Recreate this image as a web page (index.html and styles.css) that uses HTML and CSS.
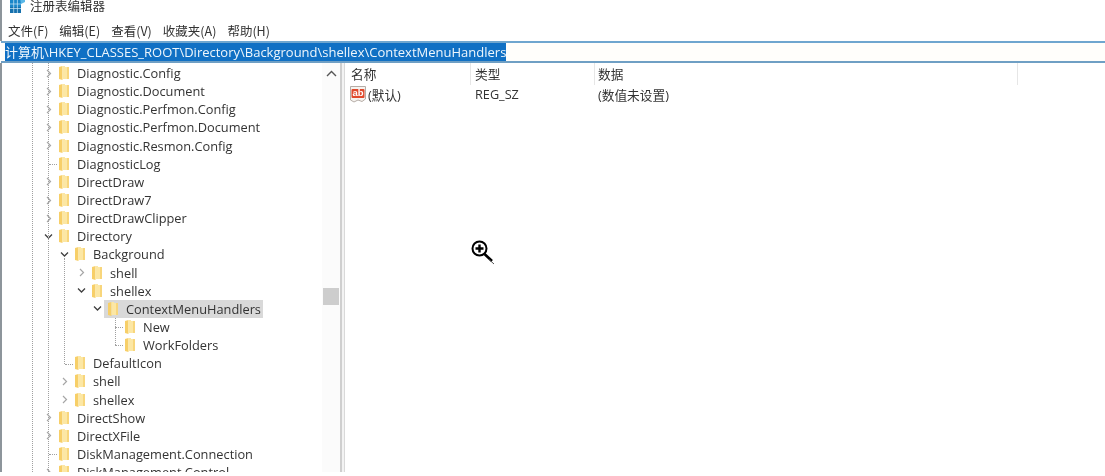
FILE: index.html
```html
<!DOCTYPE html>
<html lang="zh-CN">
<head>
<meta charset="utf-8">
<title>注册表编辑器</title>
<link rel="stylesheet" href="styles.css">
</head>
<body>
<svg class="defs" width="0" height="0" aria-hidden="true">
  <symbol id="folder" viewBox="0 0 10 14">
    <path d="M0 1 L3.5 0 V14 L0 13 Z" fill="#f7cf68"/>
    <path d="M3.5 0 H6 V1 H10 V13 H3.5 Z" fill="#fce7a4"/>
    <path d="M8 1 H10 V13 H8 Z" fill="#f8d67c"/>
  </symbol>
  <symbol id="open" viewBox="0 0 9 9"><path d="M3 1 L6.5 4.5 L3 8" fill="none" stroke="#a6a6a6" stroke-width="1.2"/></symbol>
  <symbol id="down" viewBox="0 0 9 9"><path d="M1 2.5 L4.5 6 L8 2.5" fill="none" stroke="#404040" stroke-width="1.3"/></symbol>
</svg>
<div class="window">
  <header class="titlebar">
    <svg class="appicon" width="15" height="15" viewBox="0 0 15 15">
      <rect x="0" y="2" width="11" height="13" fill="#1a86c9"/>
      <rect x="0" y="9" width="11" height="6" fill="#1570ad"/>
      <path d="M3.7 2V15M7.4 2V15M0 6H11M0 10.5H11" stroke="#cfe8f7" stroke-width="0.7"/>
      <path d="M10 0 L15 0 L15 4 L11 6 Z" fill="#5ab8e8"/>
    </svg>
    <span class="title">注册表编辑器</span>
  </header>
  <nav class="menubar">
    <span>文件(F)</span><span>编辑(E)</span><span>查看(V)</span><span>收藏夹(A)</span><span>帮助(H)</span>
  </nav>
  <div class="address"><span class="selected">计算机\HKEY_CLASSES_ROOT\Directory\Background\shellex\ContextMenuHandlers</span></div>
  <main class="panes">
    <section class="tree">
      <div class="guides">
        <i class="gv g0"></i><i class="gv g1"></i><i class="gv g2"></i><i class="gv g3"></i>
        <i class="gh gh1"></i><i class="gh gh2"></i><i class="gh gh3"></i><i class="gh gh4"></i><i class="gh gh5"></i>
      </div>
      <ul class="rows">
        <li class="row l0"><svg class="exp"><use href="#open"/></svg><svg class="fld"><use href="#folder"/></svg><span>Diagnostic.Config</span></li>
        <li class="row l0"><svg class="exp"><use href="#open"/></svg><svg class="fld"><use href="#folder"/></svg><span>Diagnostic.Document</span></li>
        <li class="row l0"><svg class="exp"><use href="#open"/></svg><svg class="fld"><use href="#folder"/></svg><span>Diagnostic.Perfmon.Config</span></li>
        <li class="row l0"><svg class="exp"><use href="#open"/></svg><svg class="fld"><use href="#folder"/></svg><span>Diagnostic.Perfmon.Document</span></li>
        <li class="row l0"><svg class="exp"><use href="#open"/></svg><svg class="fld"><use href="#folder"/></svg><span>Diagnostic.Resmon.Config</span></li>
        <li class="row l0"><i class="exp"></i><svg class="fld"><use href="#folder"/></svg><span>DiagnosticLog</span></li>
        <li class="row l0"><svg class="exp"><use href="#open"/></svg><svg class="fld"><use href="#folder"/></svg><span>DirectDraw</span></li>
        <li class="row l0"><svg class="exp"><use href="#open"/></svg><svg class="fld"><use href="#folder"/></svg><span>DirectDraw7</span></li>
        <li class="row l0"><svg class="exp"><use href="#open"/></svg><svg class="fld"><use href="#folder"/></svg><span>DirectDrawClipper</span></li>
        <li class="row l0"><svg class="exp"><use href="#down"/></svg><svg class="fld"><use href="#folder"/></svg><span>Directory</span></li>
        <li class="row l1"><svg class="exp"><use href="#down"/></svg><svg class="fld"><use href="#folder"/></svg><span>Background</span></li>
        <li class="row l2"><svg class="exp"><use href="#open"/></svg><svg class="fld"><use href="#folder"/></svg><span>shell</span></li>
        <li class="row l2"><svg class="exp"><use href="#down"/></svg><svg class="fld"><use href="#folder"/></svg><span>shellex</span></li>
        <li class="row l3"><svg class="exp"><use href="#down"/></svg><div class="current"><svg class="fld"><use href="#folder"/></svg><span>ContextMenuHandlers</span></div></li>
        <li class="row l4"><i class="exp"></i><svg class="fld"><use href="#folder"/></svg><span>New</span></li>
        <li class="row l4"><i class="exp"></i><svg class="fld"><use href="#folder"/></svg><span>WorkFolders</span></li>
        <li class="row l1"><i class="exp"></i><svg class="fld"><use href="#folder"/></svg><span>DefaultIcon</span></li>
        <li class="row l1"><svg class="exp"><use href="#open"/></svg><svg class="fld"><use href="#folder"/></svg><span>shell</span></li>
        <li class="row l1"><svg class="exp"><use href="#open"/></svg><svg class="fld"><use href="#folder"/></svg><span>shellex</span></li>
        <li class="row l0"><svg class="exp"><use href="#open"/></svg><svg class="fld"><use href="#folder"/></svg><span>DirectShow</span></li>
        <li class="row l0"><svg class="exp"><use href="#open"/></svg><svg class="fld"><use href="#folder"/></svg><span>DirectXFile</span></li>
        <li class="row l0"><i class="exp"></i><svg class="fld"><use href="#folder"/></svg><span>DiskManagement.Connection</span></li>
        <li class="row l0"><svg class="exp"><use href="#open"/></svg><svg class="fld"><use href="#folder"/></svg><span>DiskManagement.Control</span></li>
      </ul>
      <div class="scrollbar">
        <svg class="sb-up" width="11" height="8" viewBox="0 0 11 8"><path d="M1 6 L5.5 1.5 L10 6" fill="none" stroke="#555" stroke-width="1.4"/></svg>
        <div class="thumb"></div>
      </div>
    </section>
    <div class="splitter"></div>
    <section class="list">
      <div class="list-head">
        <div class="col c1">名称</div><div class="col c2">类型</div><div class="col c3">数据</div>
      </div>
      <div class="list-row">
        <div class="cell c1">
          <svg class="ab" width="18" height="18" viewBox="0 0 18 18">
            <path d="M1.5 1.5 H16.5 V14 L13 16.5 L9 15 L5 17 L1.5 15 Z" fill="#f6f3ef" stroke="#b5aca6"/>
            <rect x="2.5" y="4" width="13" height="9" rx="1" fill="#e0492c"/>
            <text x="9" y="11.4" class="abtext">ab</text>
          </svg>
          <span>(默认)</span>
        </div>
        <div class="cell c2">REG_SZ</div>
        <div class="cell c3">(数值未设置)</div>
      </div>
    </section>
  </main>
  <svg class="cursor" width="26" height="26" viewBox="0 0 26 26">
    <circle cx="9.5" cy="9.5" r="7" fill="#fff" stroke="#000" stroke-width="2"/>
    <path d="M9.5 5.5V13.5M5.5 9.5H13.5" stroke="#000" stroke-width="2.4"/>
    <path d="M14.5 15 L22 22" stroke="#000" stroke-width="2.6"/>
    <path d="M19 20.5 L24 25" stroke="#555" stroke-width="1"/>
  </svg>
</div>
</body>
</html>
```
FILE: styles.css
```css
* { box-sizing: border-box; }
html, body { margin: 0; padding: 0; height: 100%; background: #fff; overflow: hidden; }
body { font-family: "Open Sans", "Noto Sans CJK SC", sans-serif; color: #333; }
.defs { position: absolute; }
.window { position: relative; width: 1105px; height: 476px; display: flex; flex-direction: column; }

.titlebar, .menubar, .address, .panes { filter: blur(0.35px); }
.titlebar, .menubar { border-left: 2px solid #8d959b; }

.titlebar { height: 15px; display: flex; align-items: flex-start; padding-left: 8px; gap: 5px; overflow: hidden; }
.appicon { margin-top: -2px; flex: none; }
.title { font-family: "Noto Sans CJK SC", sans-serif; font-size: 12.5px; line-height: 12px; color: #333; }

.menubar { height: 26px; display: flex; align-items: center; padding: 5px 0 0 6px; gap: 11px; font-family: "Noto Sans CJK SC", sans-serif; font-size: 12.5px; color: #333; }

.address { height: 22px; margin-left: 1px; border-top: 2px solid #6fa6cf; border-bottom: 2px solid #6f9fc4; background: #fffefb; padding: 0 0 0 4px; font-size: 13px; line-height: 18px; white-space: nowrap; }
.selected { display: inline-block; height: 18px; background: #1070c4; color: #eef6fc; }

.panes { flex: 1; display: flex; min-height: 0; margin-bottom: 4px; border-left: 2px solid #8d959b; overflow: hidden; }

.tree { position: relative; width: 338px; flex: none; overflow: hidden; padding-top: 1px; }
.splitter { width: 5px; flex: none; background: #f3f3f3; border-left: 2px solid #cfcfcf; border-right: 1px solid #d9d9d9; }
.rows { list-style: none; margin: 0; padding: 0; }
.row { display: flex; align-items: center; height: 18.15px; font-size: 12.8px; white-space: nowrap; color: #333; }
.l0 { padding-left: 42px; }
.l1 { padding-left: 58px; }
.l2 { padding-left: 75px; }
.l3 { padding-left: 91px; }
.l4 { padding-left: 108px; }
.exp { display: block; width: 9px; height: 9px; flex: none; margin-right: 6px; }
.fld { display: block; width: 10px; height: 14px; flex: none; margin-right: 8px; }
.current { display: flex; align-items: center; height: 18px; background: #d9d9d9; margin-left: -4px; padding: 0 2px 0 4px; }

.guides { position: absolute; inset: 0; pointer-events: none; }
.gv { position: absolute; width: 0; border-left: 1px dotted #a0a0a0; }
.g0 { left: 30px; top: 0; bottom: 0; }
.g1 { left: 46px; top: 0; bottom: 0; }
.g2 { left: 62px; top: 195px; height: 106px; }
.g3 { left: 113px; top: 255px; height: 27px; }
.gh { position: absolute; height: 0; border-top: 1px dotted #a0a0a0; }
.gh1 { left: 47px; top: 101px; width: 8px; }
.gh2 { left: 47px; top: 391px; width: 8px; }
.gh3 { left: 63px; top: 301px; width: 8px; }
.gh4 { left: 113px; top: 264px; width: 8px; }
.gh5 { left: 113px; top: 282px; width: 8px; }

.scrollbar { position: absolute; right: 0; top: 0; bottom: 0; width: 18px; background: #fbfbfb; display: flex; flex-direction: column; align-items: center; }
.sb-up { margin-top: 7px; flex: none; }
.thumb { width: 16px; height: 17px; margin-top: 210px; background: #cdcdcd; }

.list { flex: 1; min-width: 0; font-size: 12.7px; color: #333; }
.list-head { display: flex; height: 22px; }
.col { height: 22px; line-height: 22px; border-right: 1px solid #e6e6e6; font-family: "Noto Sans CJK SC", sans-serif; }
.c1 { width: 126px; padding-left: 6px; }
.c2 { width: 124px; padding-left: 4px; }
.c3 { width: 423px; padding-left: 3px; }
.list-row { display: flex; height: 18px; align-items: center; }
.cell { white-space: nowrap; }
.cell.c1 { display: flex; align-items: center; gap: 1px; padding-left: 4px; }
.abtext { font: bold 9.5px "Liberation Sans", sans-serif; fill: #fff; text-anchor: middle; }

.cursor { position: absolute; left: 470px; top: 239px; }
```
